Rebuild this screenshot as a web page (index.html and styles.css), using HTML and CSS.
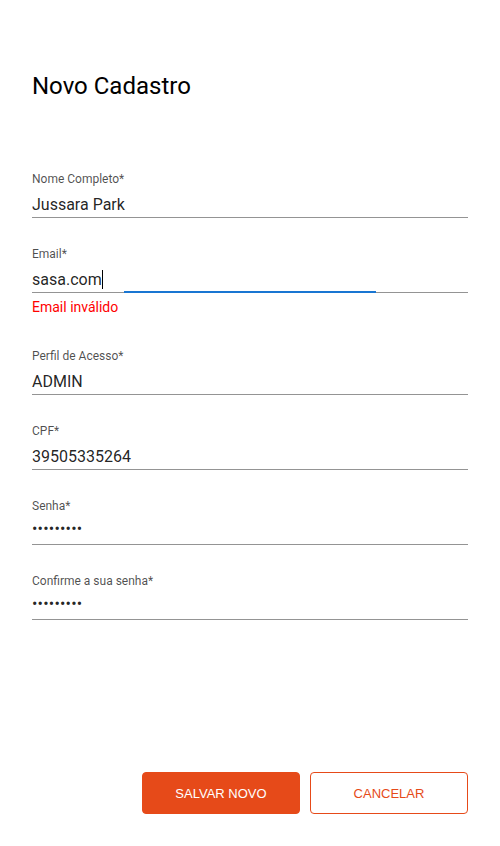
FILE: index.html
```html
<!DOCTYPE html>
<html lang="pt-BR">
<head>
<meta charset="utf-8">
<title>Novo Cadastro</title>
<link rel="stylesheet" href="styles.css">
</head>
<body>
<div class="page">
  <h1 class="title">Novo Cadastro</h1>
  <form class="form">
    <div class="field">
      <label class="label">Nome Completo*</label>
      <div class="input">Jussara Park</div>
    </div>
    <div class="field field-error">
      <label class="label">Email*</label>
      <div class="input input-focus">sasa.com<span class="caret"></span></div>
      <div class="error">Email inválido</div>
    </div>
    <div class="field">
      <label class="label">Perfil de Acesso*</label>
      <div class="input">ADMIN</div>
    </div>
    <div class="field">
      <label class="label">CPF*</label>
      <div class="input">39505335264</div>
    </div>
    <div class="field">
      <label class="label">Senha*</label>
      <div class="input pwd">•••••••••</div>
    </div>
    <div class="field">
      <label class="label">Confirme a sua senha*</label>
      <div class="input pwd">•••••••••</div>
    </div>
  </form>
  <div class="actions">
    <button class="btn btn-primary" type="button">SALVAR NOVO</button>
    <button class="btn btn-outline" type="button">CANCELAR</button>
  </div>
</div>
</body>
</html>
```
FILE: styles.css
```css
html, body {
  margin: 0;
  padding: 0;
  background: #fff;
}
body {
  font-family: Roboto, "Liberation Sans", sans-serif;
  color: rgba(0, 0, 0, 0.87);
}
.page {
  box-sizing: border-box;
  min-height: 846px;
  padding: 72px 32px 32px;
  display: flex;
  flex-direction: column;
}
.title {
  margin: 0;
  font-size: 24px;
  line-height: 28px;
  font-weight: 400;
  color: #000;
}
.form {
  margin-top: 71px;
  display: flex;
  flex-direction: column;
  gap: 28px;
}
.field {
  display: flex;
  flex-direction: column;
}
.label {
  font-size: 12px;
  line-height: 16px;
  color: rgba(0, 0, 0, 0.7);
}
.input {
  position: relative;
  box-sizing: border-box;
  height: 31px;
  padding-top: 5px;
  line-height: 25px;
  font-size: 16px;
  color: rgba(0, 0, 0, 0.87);
  border-bottom: 1px solid #949494;
}
.input-focus::after {
  content: "";
  position: absolute;
  left: 92px;
  width: 252px;
  bottom: -1px;
  height: 2px;
  background: #1976d2;
}
.caret {
  display: inline-block;
  width: 1px;
  height: 19px;
  background: #000;
  vertical-align: -4px;
}
.pwd {
  padding-top: 2px;
  letter-spacing: 0.2px;
}
.error {
  padding-top: 5px;
  height: 22px;
  font-size: 14px;
  line-height: 18px;
  color: #ff0000;
}
.actions {
  margin-top: auto;
  display: flex;
  justify-content: flex-end;
  gap: 10px;
}
.btn {
  width: 158px;
  height: 42px;
  border-radius: 4px;
  font-family: "Liberation Sans", Arial, sans-serif;
  font-size: 13px;
  cursor: pointer;
}
.btn-primary {
  background: #e64a19;
  border: 1px solid #e64a19;
  color: #fff;
}
.btn-outline {
  background: #fff;
  border: 1px solid #e64a19;
  color: #e64a19;
}
```
